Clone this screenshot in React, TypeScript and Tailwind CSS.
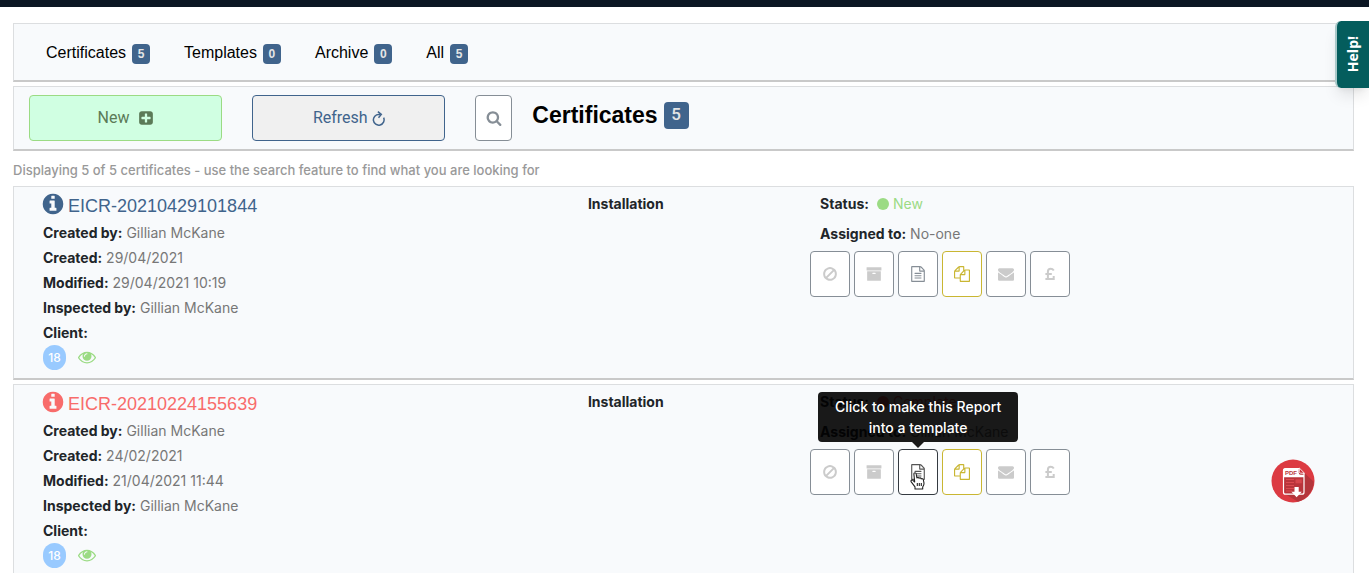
import clsx from "clsx";
import type { ReactNode } from "react";

const icons = {
  plusSquare:
    "M1408 960v-128q0-26-19-45t-45-19h-320v-320q0-26-19-45t-45-19h-128q-26 0-45 19t-19 45v320h-320q-26 0-45 19t-19 45v128q0 26 19 45t45 19h320v320q0 26 19 45t45 19h128q26 0 45-19t19-45v-320h320q26 0 45-19t19-45zm256-544v960q0 119-84.5 203.5t-203.5 84.5h-960q-119 0-203.5-84.5t-84.5-203.5v-960q0-119 84.5-203.5t203.5-84.5h960q119 0 203.5 84.5t84.5 203.5z",
  search:
    "M1216 832q0-185-131.5-316.5t-316.5-131.5-316.5 131.5-131.5 316.5 131.5 316.5 316.5 131.5 316.5-131.5 131.5-316.5zm512 832q0 52-38 90t-90 38q-54 0-90-38l-343-342q-179 124-399 124-143 0-273.5-55.5t-225-150-150-225-55.5-273.5 55.5-273.5 150-225 225-150 273.5-55.5 273.5 55.5 225 150 150 225 55.5 273.5q0 220-124 399l343 343q37 37 37 90z",
  info: "M1152 1376v-160q0-14-9-23t-23-9h-96v-512q0-14-9-23t-23-9h-320q-14 0-23 9t-9 23v160q0 14 9 23t23 9h96v320h-96q-14 0-23 9t-9 23v160q0 14 9 23t23 9h448q14 0 23-9t9-23zm-128-896v-160q0-14-9-23t-23-9h-192q-14 0-23 9t-9 23v160q0 14 9 23t23 9h192q14 0 23-9t9-23zm640 416q0 209-103 385.5t-279.5 279.5-385.5 103-385.5-103-279.5-279.5-103-385.5 103-385.5 279.5-279.5 385.5-103 385.5 103 279.5 279.5 103 385.5z",
  eye: "M1664 960q-152-236-381-353 61 104 61 225 0 185-131.5 316.5t-316.5 131.5-316.5-131.5-131.5-316.5q0-121 61-225-229 117-381 353 133 205 333.5 326.5t434.5 121.5 434.5-121.5 333.5-326.5zm-720-384q0-20-14-34t-34-14q-125 0-214.5 89.5t-89.5 214.5q0 20 14 34t34 14 34-14 14-34q0-86 61-147t147-61q20 0 34-14t14-34zm848 384q0 34-20 69-140 230-376.5 368.5t-499.5 138.5-499.5-139-376.5-368q-20-35-20-69t20-69q140-229 376.5-368t499.5-139 499.5 139 376.5 368q20 35 20 69z",
  ban: "M1440 893q0-161-87-295l-754 753q137 89 297 89 111 0 211.5-43.5t173.5-116.5 116-174.5 43-212.5zm-999 299l755-754q-135-91-300-91-148 0-273 73t-198 199-73 274q0 162 89 299zm1223-299q0 157-61 300t-163.5 246-245 164-298.5 61-298.5-61-245-164-163.5-246-61-300 61-299.5 163.5-245.5 245-164 298.5-61 298.5 61 245 164 163.5 245.5 61 299.5z",
  archive:
    "M1088 832q0-26-19-45t-45-19h-256q-26 0-45 19t-19 45 19 45 45 19h256q26 0 45-19t19-45zm576-192v960q0 26-19 45t-45 19h-1408q-26 0-45-19t-19-45v-960q0-26 19-45t45-19h1408q26 0 45 19t19 45zm64-448v256q0 26-19 45t-45 19h-1536q-26 0-45-19t-19-45v-256q0-26 19-45t45-19h1536q26 0 45 19t19 45z",
  file: "M1596 380q28 28 48 76t20 88v1152q0 40-28 68t-68 28h-1344q-40 0-68-28t-28-68v-1600q0-40 28-68t68-28h896q40 0 88 20t76 48zm-444-244v376h376q-10-29-22-41l-313-313q-12-12-41-22zm384 1528v-1024h-416q-40 0-68-28t-28-68v-416h-768v1536h1280zm-1024-864q0-14 9-23t23-9h704q14 0 23 9t9 23v64q0 14-9 23t-23 9h-704q-14 0-23-9t-9-23v-64zm736 224q14 0 23 9t9 23v64q0 14-9 23t-23 9h-704q-14 0-23-9t-9-23v-64q0-14 9-23t23-9h704zm0 256q14 0 23 9t9 23v64q0 14-9 23t-23 9h-704q-14 0-23-9t-9-23v-64q0-14 9-23t23-9h704z",
  files:
    "M1696 384q40 0 68 28t28 68v1216q0 40-28 68t-68 28h-960q-40 0-68-28t-28-68v-288h-544q-40 0-68-28t-28-68v-672q0-40 20-88t48-76l408-408q28-28 76-48t88-20h416q40 0 68 28t28 68v328q68-40 128-40h416zm-544 213l-299 299h299v-299zm-640-384l-299 299h299v-299zm196 647l316-316v-416h-384v416q0 40-28 68t-68 28h-416v640h512v-256q0-40 20-88t48-76zm956 804v-1152h-384v416q0 40-28 68t-68 28h-416v640h896z",
  envelope:
    "M1792 710v794q0 66-47 113t-113 47h-1472q-66 0-113-47t-47-113v-794q44 49 101 87 362 246 497 345 57 42 92.5 65.5t94.5 48 110 24.5h2q51 0 110-24.5t94.5-48 92.5-65.5q170-123 498-345 57-39 100-87zm0-294q0 79-49 151t-122 123q-376 261-468 325-10 7-42.5 31t-54 39-52 33.5-57.5 27.5-50 9h-2q-23 0-50-9t-57.5-27.5-52-33.5-54-39-42.5-31q-91-64-262-182.5t-205-142.5q-62-42-117-115.5t-55-136.5q0-78 41.5-130t118.5-52h1472q65 0 112.5 47t47.5 113z",
};

function Icon({ name, className }: { name: keyof typeof icons; className?: string }) {
  return (
    <svg viewBox="0 0 1792 1792" fill="currentColor" className={clsx("shrink-0", className)} aria-hidden="true">
      <path d={icons[name]} />
    </svg>
  );
}

function PoundIcon() {
  return (
    <svg viewBox="0 0 16 16" className="h-4 w-4" fill="none" stroke="currentColor" strokeWidth="2" aria-hidden="true">
      <path d="M11.8 4.6C11 3.3 10 2.7 8.7 2.7 7 2.7 5.9 3.8 5.9 5.5v7.6M3.4 8.1h6.4M3.4 13h8.3v-3" />
    </svg>
  );
}

function RefreshIcon() {
  return (
    <svg viewBox="0 0 12 14" className="h-[15px] w-[13px]" fill="none" stroke="currentColor" strokeWidth="1.4" aria-hidden="true">
      <path d="M10.8 6.2A5 5 0 1 1 6.4 3.2h1.4" />
      <path d="M5.4.6l3.2 2.6-2.6 3" />
    </svg>
  );
}

function PdfIcon() {
  return (
    <svg viewBox="0 0 44 44" className="h-11 w-11" aria-hidden="true">
      <circle cx="22" cy="22" r="21.5" fill="#dc3a42" />
      <path d="M33 13.5l9.7 9.3A21.5 21.5 0 0 1 27 42.8L14 35z" fill="#b4353b" />
      <path
        d="M14.5 9.5h13.2l5.3 5.3v18.4a2 2 0 0 1-2 2H14.5a2 2 0 0 1-2-2V11.5a2 2 0 0 1 2-2z"
        fill="#b9343b"
        stroke="#fff"
        strokeWidth="1.2"
      />
      <path d="M12.5 10.5a1 1 0 0 1 1-1h14.2v4.3a2 2 0 0 0 2 2H33v2.4H12.500z" fill="#fff" />
      <path d="M28.3 9l5.2 5.2h-3.7a1.5 1.5 0 0 1-1.5-1.5z" fill="#c9343c" stroke="#fff" strokeWidth=".8" />
      <path d="M15 20.5h8M15 23.5h8M15 26.5h8M15 29.5h8M15 32h6" stroke="#dc4a50" />
      <path d="M24.5 20.3h6.3v4h-6.300z" fill="#d6474d" />
      <path d="M23.500 28h4.200v4.700h3.100l-5.200 5.600-5.200-5.600h3.100z" fill="#fff" />
      <text x="14" y="16.200" fontFamily="Liberation Sans, sans-serif" fontWeight="700" fontSize="6" fill="#b9343b">
        PDF
      </text>
    </svg>
  );
}

function HandCursor() {
  return (
    <svg
      viewBox="0 0 16 18"
      className="pointer-events-none absolute top-[23px] left-3 h-[18px] w-4"
      fill="#fff"
      stroke="#222"
      strokeWidth="1.1"
      strokeLinejoin="round"
      aria-hidden="true"
    >
      <path d="M5 17v-2.200L1.400 10.200c-.8-1-.5-1.900.3-2.100.7-.2 1.300.2 1.900.9L4.700 10 3.900 2.300C3.800 1.200 4.300.7 5 .7s1.100.5 1.200 1.300L6.900 6c.3-.8 1.900-.8 2.200.3.500-.7 1.900-.6 2.100.6.600-.5 2 0 2.200 1.100l.6 3.200c.1 1.700-.6 2.600-1.300 3.800v2z" />
      <path d="M7.300 11v3M9.300 11v3M11.300 11v3" fill="none" />
    </svg>
  );
}

const tabs = [
  { label: "Certificates", count: 5 },
  { label: "Templates", count: 0 },
  { label: "Archive", count: 0 },
  { label: "All", count: 5 },
];

interface Certificate {
  id: string;
  created: string;
  modified: string;
  status: string;
  assignedTo: string;
  complete?: boolean;
}

const certificates: Certificate[] = [
  {
    id: "EICR-20210429101844",
    created: "29/04/2021",
    modified: "29/04/2021 10:19",
    status: "New",
    assignedTo: "No-one",
  },
  {
    id: "EICR-20210224155639",
    created: "24/02/2021",
    modified: "21/04/2021 11:44",
    status: "Complete",
    assignedTo: "Gillian McKane",
    complete: true,
  },
];

const panel = "border border-b-2 border-[#dcdee0] border-b-[#c9c9c9] bg-[#f8fafc]";

function Field({ label, children }: { label: string; children?: ReactNode }) {
  return (
    <p>
      <b className="font-bold text-[#212529]">{label}</b> {children}
    </p>
  );
}

function ActionButton({ label, className, children }: { label: string; className?: string; children: ReactNode }) {
  return (
    <button
      type="button"
      aria-label={label}
      className={clsx(
        "flex h-[46px] w-10 items-center justify-center rounded border bg-white",
        className ?? "border-[#868e96] text-[#cbcbcb]",
      )}
    >
      {children}
    </button>
  );
}

function CertificateRow({ cert }: { cert: Certificate }) {
  return (
    <article className={clsx(panel, "mb-1 grid grid-cols-12 pb-2 text-sm/[25px] text-[#777]")}>
      <div className="col-span-5 pt-1 pl-[29px]">
        <h2>
          <a
            href="#"
            className={clsx(
              "flex h-[29px] items-center gap-1 font-['Liberation_Sans',sans-serif] text-lg",
              cert.complete ? "text-[#f86c6b]" : "text-[#40648c]",
            )}
          >
            <Icon name="info" className="mb-1 -ml-[2px] h-6 w-6 -mr-[1px]" />
            {cert.id}
          </a>
        </h2>
        <Field label="Created by:">Gillian McKane</Field>
        <Field label="Created:">{cert.created}</Field>
        <Field label="Modified:">{cert.modified}</Field>
        <Field label="Inspected by:">Gillian McKane</Field>
        <Field label="Client:" />
        <div className="flex items-center gap-3">
          <span className="flex h-[25px] w-[23px] items-center justify-center rounded-full bg-[#99caff] text-xs font-medium text-white">
            18
          </span>
          <Icon name="eye" className="mb-[2px] h-[18px] w-[18px] text-[#9bdb84]" />
        </div>
      </div>
      <div className="col-span-2 px-4 pt-1">
        <b className="font-bold text-[#212529]">Installation</b>
      </div>
      <div className="col-span-4 pt-1 pl-[15px]">
        <div className="mb-[5px] space-y-[5px] pl-[10px]">
          <div className="flex items-center">
            <b className="mr-2 font-bold text-[#212529]">Status:</b>
            <span className={clsx("flex items-center gap-1", cert.complete ? "text-[#f86c6b]" : "text-[#9bdb84]")}>
              <i className="h-3 w-3 rounded-full bg-current" />
              {cert.status}
            </span>
          </div>
          <Field label="Assigned to:">{cert.assignedTo}</Field>
        </div>
        <div className="flex gap-1">
          <ActionButton label="Void">
            <Icon name="ban" className="h-4 w-4" />
          </ActionButton>
          <ActionButton label="Archive">
            <Icon name="archive" className="h-4 w-4" />
          </ActionButton>
          <div className="relative">
            <ActionButton
              label="Make template"
              className={cert.complete ? "border-[#343a40] text-[#555]" : "border-[#868e96] text-[#868e96]"}
            >
              <Icon name="file" className="h-4 w-4" />
            </ActionButton>
            {cert.complete && (
              <>
                <div
                  role="tooltip"
                  className="absolute bottom-[53px] left-1/2 w-[200px] -translate-x-1/2 rounded bg-black/90 px-2 py-1 text-center text-sm/[21px] font-medium text-white"
                >
                  Click to make this Report into a template
                  <span className="absolute top-full left-1/2 -translate-x-1/2 border-x-[6px] border-t-[6px] border-x-transparent border-t-black/90" />
                </div>
                <HandCursor />
              </>
            )}
          </div>
          <ActionButton label="Copy" className="border-[#c9b632] text-[#c9b632]">
            <Icon name="files" className="h-4 w-4" />
          </ActionButton>
          <ActionButton label="Email">
            <Icon name="envelope" className="h-4 w-4" />
          </ActionButton>
          <ActionButton label="Invoice">
            <PoundIcon />
          </ActionButton>
        </div>
      </div>
      <div className="flex items-center justify-end pt-2 pr-[38px]">
        {cert.complete && (
          <a href="#" aria-label="Download PDF">
            <PdfIcon />
          </a>
        )}
      </div>
    </article>
  );
}

export default function App() {
  return (
    <div className="relative h-screen overflow-hidden bg-white font-[Inter,sans-serif]">
      <header className="h-[7px] bg-[#0b1623]" />
      <main className="mt-4 mr-[15px] ml-[13px]">
        <nav className={clsx(panel, "mb-1 flex h-[59px] items-center gap-[34px] px-8 pt-[2px] font-['Liberation_Sans',sans-serif]")}>
          {tabs.map((tab) => (
            <a key={tab.label} href="#" className="flex items-center gap-[6px] text-base text-black">
              {tab.label}
              <span className="mt-[2px] flex h-5 w-[18px] items-center justify-center rounded bg-[#40648c] text-xs font-bold text-[#e4e5e6]">
                {tab.count}
              </span>
            </a>
          ))}
        </nav>

        <section className={clsx(panel, "grid grid-cols-12 py-2")}>
          <div className="col-span-2 px-[15px]">
            <button
              type="button"
              className="flex h-[46px] w-full items-center justify-center gap-2 rounded border border-[#9bdb84] bg-[#d0ffe2] font-[Roboto,sans-serif] text-base text-[#5b7a57]"
            >
              New <Icon name="plusSquare" className="h-4 w-4" />
            </button>
          </div>
          <div className="col-span-2 px-[15px]">
            <button
              type="button"
              className="flex h-[46px] w-full items-center justify-center gap-1 rounded border border-[#40648c] bg-[#f0f0f0] font-[Roboto,sans-serif] text-base text-[#40648c]"
            >
              Refresh <RefreshIcon />
            </button>
          </div>
          <div className="col-span-8 flex gap-5 pl-[15px]">
            <button
              type="button"
              aria-label="Search"
              className="flex h-[46px] w-[37px] items-center justify-center rounded border border-[#868e96] bg-white text-[#868e96]"
            >
              <Icon name="search" className="h-4 w-4" />
            </button>
            <h1 className="flex h-10 items-center gap-[6px] font-['Liberation_Sans',sans-serif] text-[23px] font-bold text-black">
              Certificates
              <span className="flex h-[27px] w-[25px] items-center justify-center rounded bg-[#40648c] font-[Roboto,sans-serif] text-[17px] font-medium text-[#e4e5e6]">
                5
              </span>
            </h1>
          </div>
        </section>

        <p className="pt-[9px] pb-[5px] text-[13px]/[21px] font-medium text-[#999]">
          Displaying 5 of 5 certificates - use the search feature to find what you are looking for
        </p>

        {certificates.map((cert) => (
          <CertificateRow key={cert.id} cert={cert} />
        ))}
      </main>

      <button
        type="button"
        className="absolute top-[21px] right-0 flex h-[67px] w-[34px] items-center justify-center rounded-l-md border-l-2 border-[#a9c9c9] bg-[#045d5d] font-['Open_Sans',sans-serif] text-sm font-bold text-white shadow-lg"
      >
        <span className="rotate-180 [writing-mode:vertical-rl]">Help!</span>
      </button>
    </div>
  );
}
